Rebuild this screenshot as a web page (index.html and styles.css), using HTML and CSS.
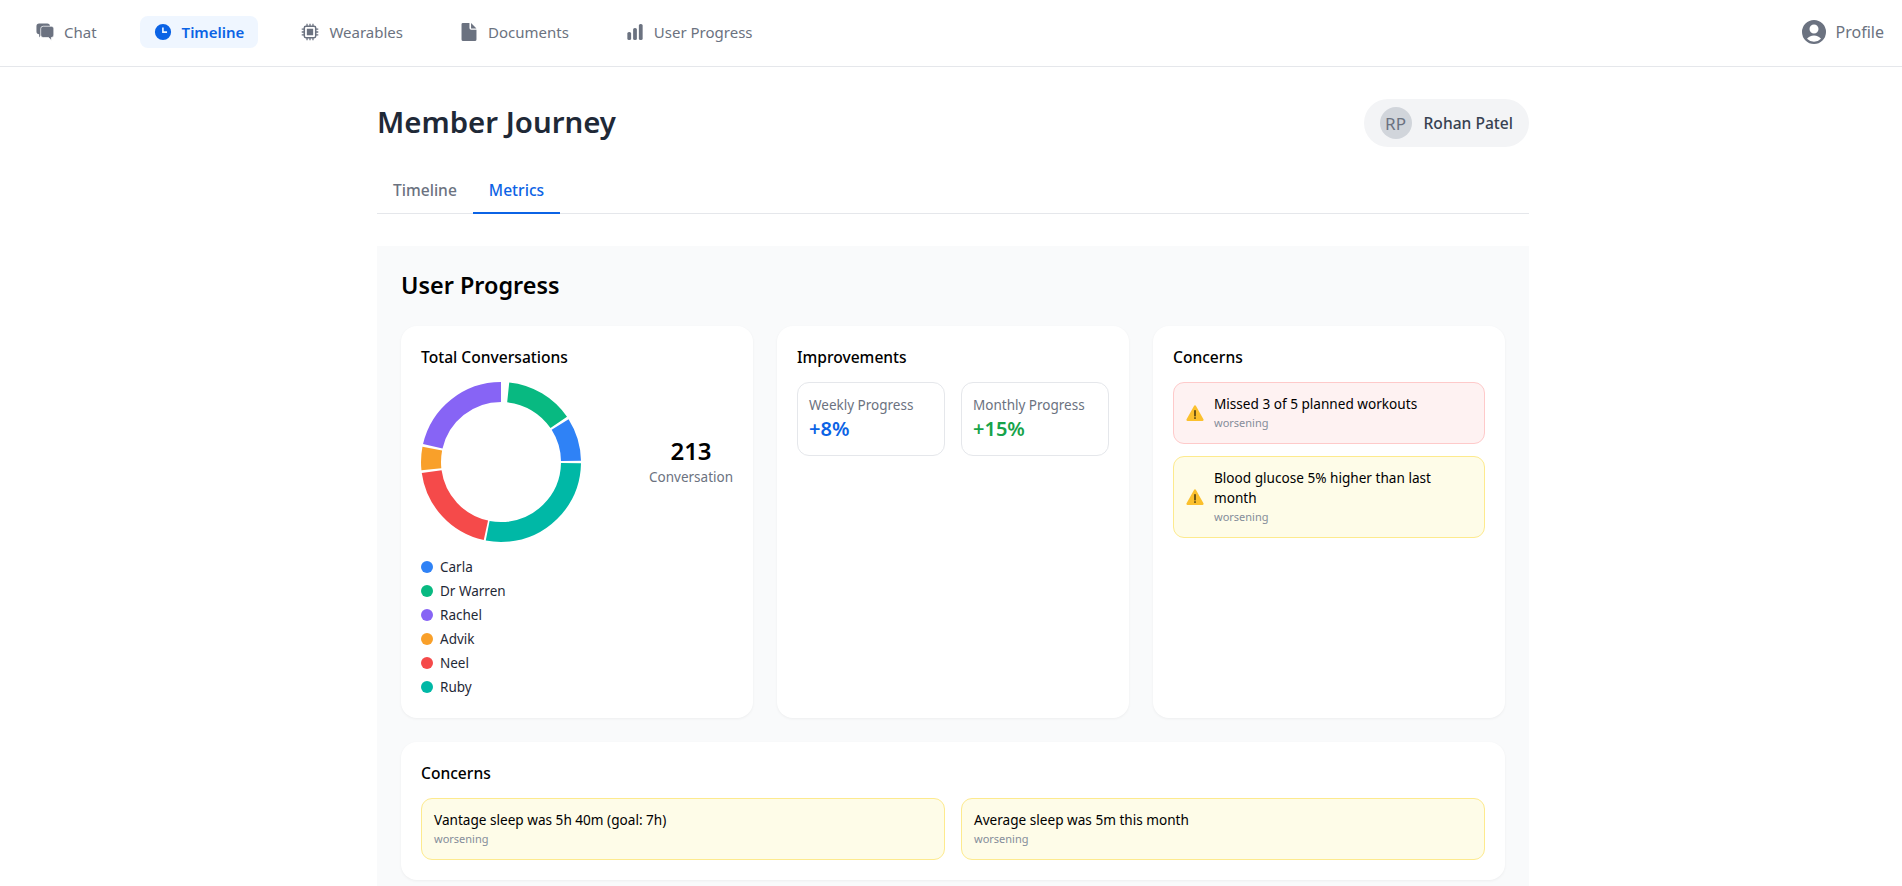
FILE: index.html
```html
<html>
<head>
    <title>Member Journey</title>
    <link rel="stylesheet" href="styles.css">
</head>
<body>
    <nav class="topbar">
        <div class="nav-links">
            <a class="nav-item">
                <svg class="nav-icon" viewBox="0 0 20 20"><path d="M3.500 .5h9A3 3 0 0 1 15.500 3.500v6a3 3 0 0 1-3 3H6l-2.500 3.500v-3.600A3 3 0 0 1 .5 9.500v-6a3 3 0 0 1 3-3z"/><path stroke="#ffffff" stroke-width=".8" d="M8 3.600h9a2.800 2.800 0 0 1 2.800 2.800v7a2.800 2.800 0 0 1-2.800 2.800v3.300l-3-3.300H8a2.800 2.800 0 0 1-2.800-2.800v-7A2.800 2.800 0 0 1 8 3.600z"/></svg>
                <span>Chat</span>
            </a>
            <a class="nav-item active">
                <svg class="nav-icon" viewBox="0 0 20 20"><path fill-rule="evenodd" d="M10 1a9 9 0 1 1 0 18 9 9 0 0 1 0-18zM9 5v6h5.500v-1.800H10.800V5z"/></svg>
                <span>Timeline</span>
            </a>
            <a class="nav-item">
                <svg class="nav-icon" viewBox="0 0 20 20"><path fill-rule="evenodd" d="M6 .8h1.400v2h1.900v-2h1.400v2h1.900v-2H14v2h.5A2.700 2.700 0 0 1 17.200 5.500V6h2v1.400h-2v1.900h2v1.400h-2v1.900h2V14h-2v.5a2.700 2.700 0 0 1-2.700 2.700H14v2h-1.400v-2h-1.900v2H9.300v-2H7.400v2H6v-2h-.5a2.700 2.700 0 0 1-2.700-2.700V14h-2v-1.400h2v-1.900h-2V9.300h2V7.400h-2V6h2v-.5a2.700 2.700 0 0 1 2.700-2.700H6zM5.500 4.500a1 1 0 0 0-1 1v9a1 1 0 0 0 1 1h9a1 1 0 0 0 1-1v-9a1 1 0 0 0-1-1zM6.500 6.500h7v7h-7z"/></svg>
                <span>Wearables</span>
            </a>
            <a class="nav-item">
                <svg class="nav-icon" viewBox="0 0 20 20"><path d="M3.200 0H10.500v5.500A2 2 0 0 0 12.500 7.500h5.800V18.200A1.800 1.800 0 0 1 16.500 20H3.500A1.800 1.800 0 0 1 1.700 18.200V1.500A1.500 1.500 0 0 1 3.200 0z"/><path d="M12.300 0l6 6h-6z"/></svg>
                <span>Documents</span>
            </a>
            <a class="nav-item">
                <svg class="nav-icon" viewBox="0 0 20 20"><rect x="1.500" y="10" width="4.200" height="9" rx="1.800"/><rect x="7.900" y="5.500" width="4.200" height="13.500" rx="1.800"/><rect x="14.300" y="1" width="4.200" height="18" rx="1.800"/></svg>
                <span>User Progress</span>
            </a>
        </div>
        <a class="nav-item profile">
            <svg class="profile-icon" viewBox="0 0 24 24"><path fill-rule="evenodd" d="M12 0a12 12 0 1 1 0 24 12 12 0 0 1 0-24zm0 4.500a4.500 4.500 0 1 0 0 9 4.500 4.500 0 0 0 0-9zM12 15.500c-3 0-5.600 1.300-7 3.300a9.700 9.700 0 0 0 14 0c-1.400-2-4-3.300-7-3.300z"/></svg>
            <span>Profile</span>
        </a>
    </nav>

    <main class="page">
        <header class="page-header">
            <h1>Member Journey</h1>
            <div class="member-pill">
                <div class="avatar">RP</div>
                <span>Rohan Patel</span>
            </div>
        </header>

        <div class="tabs">
            <a class="tab">Timeline</a>
            <a class="tab tab-active">Metrics</a>
        </div>

        <section class="panel">
            <h2>User Progress</h2>
            <div class="card-grid">
                <div class="card">
                    <h3>Total Conversations</h3>
                    <div class="donut-row">
                        <svg class="donut" viewBox="0 0 160 160">
                            <g transform="rotate(-90 80 80)" fill="none" stroke-width="20">
                                <circle cx="80" cy="80" r="70" pathLength="360" stroke="#08b981" stroke-dasharray="49.600 360" stroke-dashoffset="-6"/>
                                <circle cx="80" cy="80" r="70" pathLength="360" stroke="#2f82f6" stroke-dasharray="31.400 360" stroke-dashoffset="-57.600"/>
                                <circle cx="80" cy="80" r="70" pathLength="360" stroke="#00b8a6" stroke-dasharray="100 360" stroke-dashoffset="-91"/>
                                <circle cx="80" cy="80" r="70" pathLength="360" stroke="#f54a4a" stroke-dasharray="69.500 360" stroke-dashoffset="-192.500"/>
                                <circle cx="80" cy="80" r="70" pathLength="360" stroke="#f9a02a" stroke-dasharray="17 360" stroke-dashoffset="-264"/>
                                <circle cx="80" cy="80" r="70" pathLength="360" stroke="#8764f5" stroke-dasharray="81 360" stroke-dashoffset="-283"/>
                            </g>
                        </svg>
                        <div class="donut-total">
                            <div class="total-value">213</div>
                            <div class="total-label">Conversation</div>
                        </div>
                    </div>
                    <ul class="legend">
                        <li><span class="dot dot-carla"></span>Carla</li>
                        <li><span class="dot dot-warren"></span>Dr Warren</li>
                        <li><span class="dot dot-rachel"></span>Rachel</li>
                        <li><span class="dot dot-advik"></span>Advik</li>
                        <li><span class="dot dot-neel"></span>Neel</li>
                        <li><span class="dot dot-ruby"></span>Ruby</li>
                    </ul>
                </div>

                <div class="card">
                    <h3>Improvements</h3>
                    <div class="stat-row">
                        <div class="stat">
                            <div class="stat-label">Weekly Progress</div>
                            <div class="stat-value blue">+8%</div>
                        </div>
                        <div class="stat">
                            <div class="stat-label">Monthly Progress</div>
                            <div class="stat-value green">+15%</div>
                        </div>
                    </div>
                </div>

                <div class="card">
                    <h3>Concerns</h3>
                    <div class="alert-list">
                        <div class="alert alert-red">
                            <svg class="warn-icon" viewBox="0 0 16 16"><path fill="#fbc02d" d="M8 1.200c.4 0 .7.200.9.600l6.600 11.800c.4.700 0 1.400-.8 1.400H1.300c-.8 0-1.200-.7-.8-1.400L7.100 1.800c.2-.4.500-.6.900-.6z"/><rect fill="#4a3b10" x="7.300" y="5.500" width="1.400" height="5.500"/><rect fill="#4a3b10" x="7.300" y="11.800" width="1.400" height="1.400"/></svg>
                            <div>
                                <div class="alert-text">Missed 3 of 5 planned workouts</div>
                                <div class="alert-note">worsening</div>
                            </div>
                        </div>
                        <div class="alert alert-yellow">
                            <svg class="warn-icon" viewBox="0 0 16 16"><path fill="#fbc02d" d="M8 1.200c.4 0 .7.200.9.600l6.600 11.800c.4.700 0 1.400-.8 1.400H1.300c-.8 0-1.200-.7-.8-1.400L7.100 1.800c.2-.4.500-.6.900-.6z"/><rect fill="#4a3b10" x="7.300" y="5.500" width="1.400" height="5.500"/><rect fill="#4a3b10" x="7.300" y="11.800" width="1.400" height="1.400"/></svg>
                            <div>
                                <div class="alert-text">Blood glucose 5% higher than last month</div>
                                <div class="alert-note">worsening</div>
                            </div>
                        </div>
                    </div>
                </div>
            </div>

            <div class="card card-wide">
                <h3>Concerns</h3>
                <div class="alert-columns">
                    <div class="alert alert-yellow">
                        <div>
                            <div class="alert-text">Vantage sleep was 5h 40m (goal: 7h)</div>
                            <div class="alert-note">worsening</div>
                        </div>
                    </div>
                    <div class="alert alert-yellow">
                        <div>
                            <div class="alert-text">Average sleep was 5m this month</div>
                            <div class="alert-note">worsening</div>
                        </div>
                    </div>
                </div>
            </div>
        </section>
    </main>
</body>
</html>
```

FILE: styles.css
```css
html, body {
    height: 886px;
    overflow: hidden;
}
body {
    margin: 0;
    background: #ffffff;
    font-family: "Noto Sans", sans-serif;
    color: #000000;
}
.topbar {
    height: 67px;
    box-sizing: border-box;
    border-bottom: 1px solid #e5e7eb;
    display: flex;
    align-items: center;
    justify-content: space-between;
    padding: 0 18px 2px 22px;
}
.nav-links {
    display: flex;
    gap: 29px;
}
.nav-item {
    display: flex;
    align-items: center;
    gap: 10px;
    height: 32px;
    padding: 0 14px;
    border-radius: 8px;
    font-size: 15px;
    color: #6b7280;
}
.nav-item.active {
    background: #eff6ff;
    color: #0b63e5;
    font-weight: 600;
}
.nav-icon {
    width: 18px;
    height: 18px;
    fill: currentColor;
}
.profile {
    padding: 0;
    font-size: 16px;
}
.profile-icon {
    width: 24px;
    height: 24px;
    fill: currentColor;
}
.page {
    width: 1152px;
    margin-left: 377px;
}
.page-header {
    display: flex;
    align-items: center;
    justify-content: space-between;
    padding-top: 32px;
}
h1 {
    margin: -2px 0 0;
    font-size: 29.400px;
    font-weight: 600;
    color: #1f2937;
}
.member-pill {
    display: flex;
    align-items: center;
    gap: 12px;
    height: 48px;
    padding: 0 16px;
    border-radius: 24px;
    background: #f3f4f6;
    font-size: 15.600px;
    font-weight: 500;
    color: #374151;
}
.avatar {
    width: 32px;
    height: 32px;
    border-radius: 50%;
    background: #d1d5db;
    display: flex;
    align-items: center;
    justify-content: center;
    font-size: 17px;
    font-weight: 400;
    color: #6b7280;
}
.tabs {
    display: flex;
    margin-top: 19px;
    border-bottom: 1px solid #e5e7eb;
}
.tab {
    height: 48px;
    box-sizing: border-box;
    padding: 0 16px;
    line-height: 48px;
    font-size: 15.600px;
    font-weight: 500;
    color: #6b7280;
    margin-bottom: -1px;
}
.tab-active {
    color: #0b63e5;
    border-bottom: 2px solid #0b63e5;
}
.panel {
    margin-top: 32px;
    padding: 24px;
    background: #f9fafb;
}
h2 {
    margin: -1px 0 25px;
    font-size: 23.400px;
    line-height: 32px;
    font-weight: 600;
    color: #000000;
}
.card-grid {
    display: grid;
    grid-template-columns: repeat(3, 1fr);
    gap: 24px;
}
.card {
    background: #ffffff;
    border-radius: 16px;
    padding: 20px 20px 19px;
    box-shadow: 0 1px 3px rgba(0, 0, 0, 0.05);
}
.card-wide {
    margin-top: 24px;
    padding-bottom: 20px;
}
h3 {
    margin: -1px 0 13px;
    font-size: 15.600px;
    line-height: 24px;
    font-weight: 500;
}
.donut-row {
    display: flex;
    align-items: center;
    justify-content: space-between;
}
.donut {
    width: 160px;
    height: 160px;
}
.donut-total {
    text-align: center;
    margin-top: -2px;
}
.total-value {
    font-size: 24px;
    line-height: 32px;
    font-weight: 600;
}
.total-label {
    font-size: 13.500px;
    line-height: 20px;
    color: #6b7280;
}
.legend {
    list-style: none;
    margin: 13px 0 0;
    padding: 0;
}
.legend li {
    display: flex;
    align-items: center;
    gap: 7px;
    height: 24px;
    font-size: 13.500px;
    color: #1f2937;
}
.dot {
    width: 12px;
    height: 12px;
    border-radius: 50%;
}
.dot-carla { background: #2f82f6; }
.dot-warren { background: #08b981; }
.dot-rachel { background: #8764f5; }
.dot-advik { background: #f9a02a; }
.dot-neel { background: #f54a4a; }
.dot-ruby { background: #00b8a6; }
.stat-row {
    display: grid;
    grid-template-columns: 1fr 1fr;
    gap: 16px;
}
.stat {
    height: 74px;
    box-sizing: border-box;
    padding: 12px 11px;
    border: 1px solid #e5e7eb;
    border-radius: 12px;
}
.stat-label {
    font-size: 13.500px;
    line-height: 20px;
    color: #6b7280;
}
.stat-value {
    font-size: 20px;
    line-height: 28px;
    font-weight: 600;
}
.blue { color: #0b63e5; }
.green { color: #16a34a; }
.alert-list {
    display: flex;
    flex-direction: column;
    gap: 12px;
}
.alert-columns {
    display: grid;
    grid-template-columns: 1fr 1fr;
    gap: 16px;
}
.alert {
    display: flex;
    align-items: center;
    gap: 10px;
    padding: 11px 12px;
    border: 1px solid;
    border-radius: 11px;
}
.alert-red {
    background: #fef2f2;
    border-color: #fecaca;
}
.alert-yellow {
    background: #fefce8;
    border-color: #fdea8e;
}
.warn-icon {
    width: 18px;
    height: 18px;
    flex-shrink: 0;
}
.alert-text {
    font-size: 13.600px;
    line-height: 20px;
    font-weight: 400;
}
.alert-note {
    font-size: 11px;
    line-height: 18px;
    color: #858d9a;
}
```
